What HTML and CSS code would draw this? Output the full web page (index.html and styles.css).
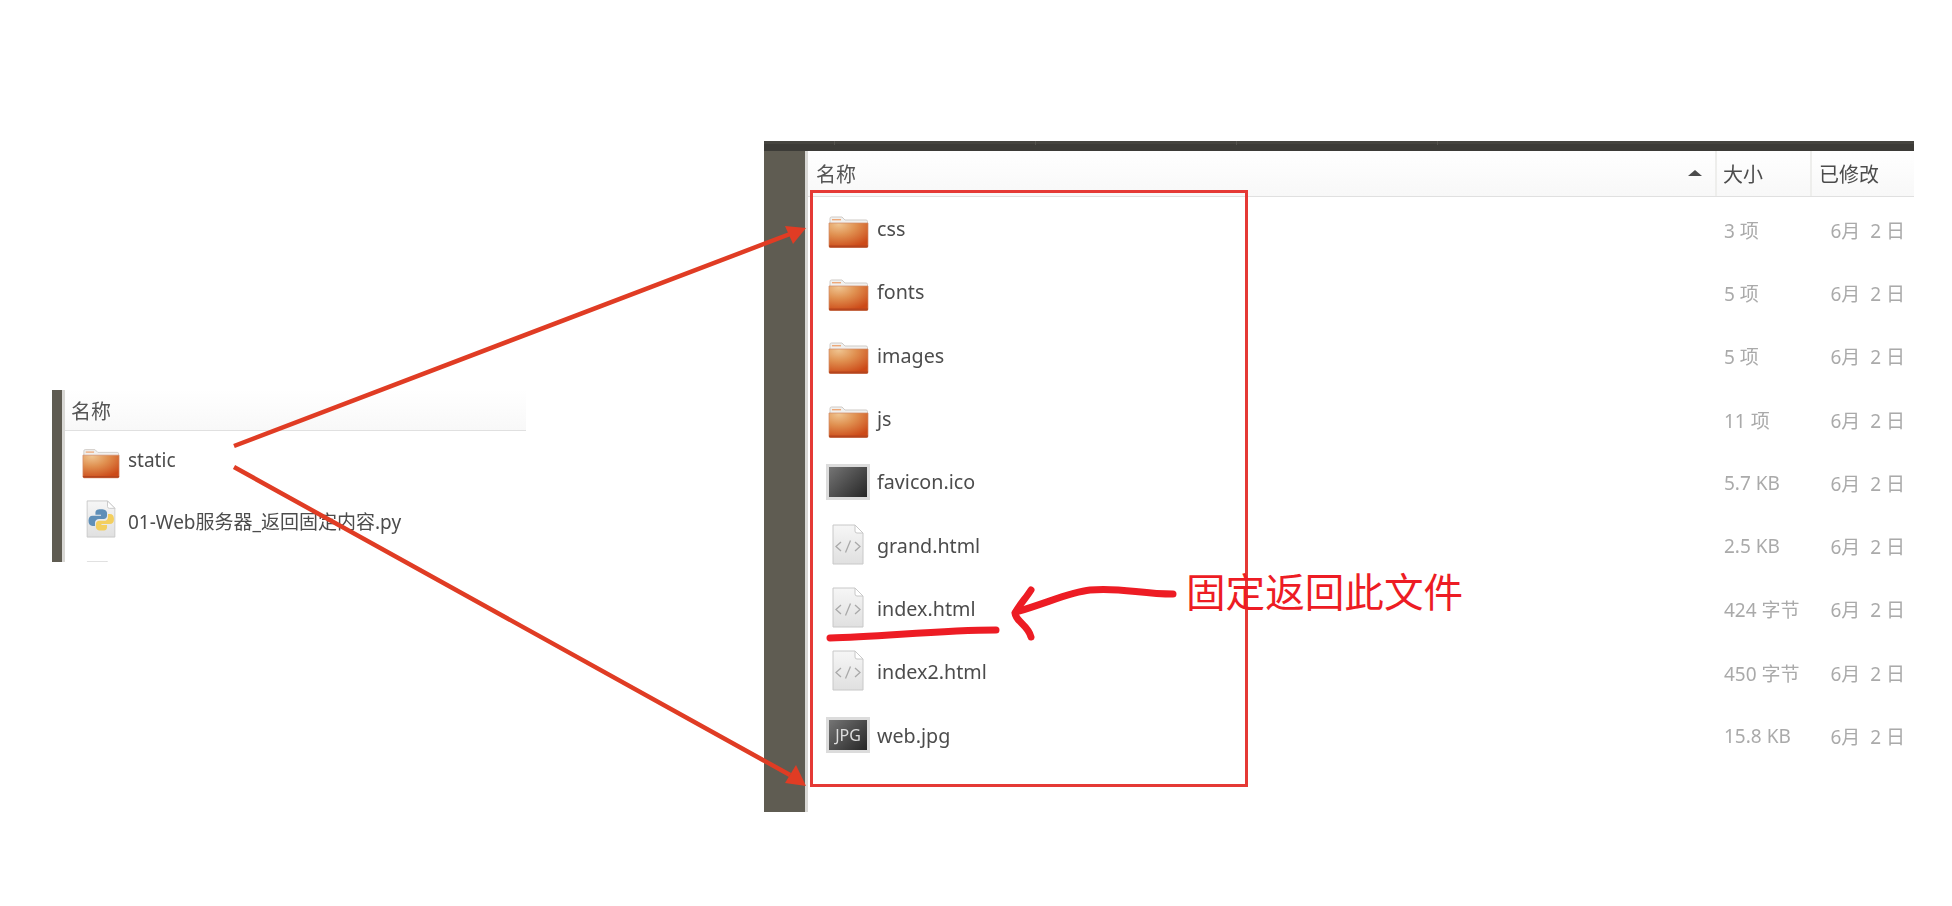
FILE: index.html
```html
<!DOCTYPE html>
<html lang="zh-CN">
<head>
    <meta charset="UTF-8">
    <title>static</title>
    <link rel="stylesheet" href="styles.css">
</head>
<body>
    <svg class="defs" width="0" height="0">
        <defs>
            <radialGradient id="folderFill" cx="0.25" cy="0.05" r="1">
                <stop offset="0" stop-color="#efc490"/>
                <stop offset="0.45" stop-color="#e09050"/>
                <stop offset="1" stop-color="#cc4a18"/>
            </radialGradient>
            <linearGradient id="pageFill" x1="0" y1="0" x2="0" y2="1">
                <stop offset="0" stop-color="#f6f6f6"/>
                <stop offset="1" stop-color="#e0e0e0"/>
            </linearGradient>
            <symbol id="folder" viewBox="0 0 41 32">
                <path d="M2 7V2.500Q2 1 3.500 1H14l3 3h21q1.500 0 1.500 1.500V8H2z" fill="#f1f0ee" stroke="#cfcbc7"/>
                <rect x="4" y="3" width="9" height="1.400" fill="#eda878"/>
                <path d="M1 7h39v23q0 1.500-1.500 1.500h-36Q1 31.500 1 30z" fill="url(#folderFill)" stroke="#d08a68" stroke-width="0.700"/>
                <path d="M1 29.500h39V30q0 1.500-1.500 1.500h-36Q1 31.500 1 30z" fill="#b5451e"/>
            </symbol>
            <symbol id="page" viewBox="0 0 32 41">
                <path d="M1 1h22l8 8v31H1z" fill="url(#pageFill)" stroke="#c8c8c8"/>
                <path d="M23 1v6q0 2 2 2h6z" fill="#fff" stroke="#c8c8c8"/>
            </symbol>
            <symbol id="code" viewBox="0 0 32 41">
                <use href="#page" width="32" height="41"/>
                <path d="M9 18l-5 4.500 5 4.500M23 18l5 4.500-5 4.500M18.500 16.500l-5 12" fill="none" stroke="#a9a9a9" stroke-width="1.300"/>
            </symbol>
            <symbol id="py" viewBox="0 0 32 41">
                <use href="#page" width="32" height="41"/>
                <path d="M16 10c-5 0-6 1.500-6 4v2h6v1H7c-3 0-4.500 2-4.500 5.500S4 28 7 28h2.500v-3.500c0-2.500 2-4 4.500-4h5c2 0 3.500-1.500 3.500-3.500v-3c0-2.500-2.500-4-6.500-4z" fill="#5f8fb8"/>
                <path d="M16.500 33c5 0 6-1.500 6-4v-2h-6v-1h9c3 0 4.500-2 4.500-5.500S28.500 15 25.500 15H23.500v3.500c0 2.500-2 4-4.500 4h-5c-2 0-3.500 1.500-3.500 3.500v3c0 2.500 2.500 4 6 4z" fill="#f3cf5f"/>
            </symbol>
        </defs>
    </svg>

    <main class="stage">
        <section class="window window-small">
            <div class="side"></div>
            <div class="pane">
                <div class="list-head">
                    <div class="col-name">名称</div>
                </div>
                <div class="row">
                    <div class="icon"><svg class="folder-icon" width="38" height="31"><use href="#folder"/></svg></div>
                    <div class="col-name">static</div>
                </div>
                <div class="row">
                    <div class="icon"><svg class="file-icon" width="30" height="38"><use href="#py"/></svg></div>
                    <div class="col-name">01-Web服务器_返回固定内容.py</div>
                </div>
                <div class="row">
                    <div class="icon"><svg class="file-icon" width="30" height="38"><use href="#page"/></svg></div>
                </div>
            </div>
        </section>

        <section class="window window-big">
            <div class="topbar">
                <span class="tab-line"></span>
                <span class="tab-line"></span>
                <span class="tab-line"></span>
                <span class="tab-line"></span>
            </div>
            <div class="body">
                <div class="side"></div>
                <div class="pane">
                    <div class="list-head">
                        <div class="col-name">名称<span class="sort"></span></div>
                        <div class="col-size">大小</div>
                        <div class="col-date">已修改</div>
                    </div>
                    <div class="row">
                        <div class="icon"><svg class="folder-icon" width="41" height="32"><use href="#folder"/></svg></div>
                        <div class="col-name">css</div>
                        <div class="col-size">3 项</div>
                        <div class="col-date">6月 &nbsp;2 日</div>
                    </div>
                    <div class="row">
                        <div class="icon"><svg class="folder-icon" width="41" height="32"><use href="#folder"/></svg></div>
                        <div class="col-name">fonts</div>
                        <div class="col-size">5 项</div>
                        <div class="col-date">6月 &nbsp;2 日</div>
                    </div>
                    <div class="row">
                        <div class="icon"><svg class="folder-icon" width="41" height="32"><use href="#folder"/></svg></div>
                        <div class="col-name">images</div>
                        <div class="col-size">5 项</div>
                        <div class="col-date">6月 &nbsp;2 日</div>
                    </div>
                    <div class="row">
                        <div class="icon"><svg class="folder-icon" width="41" height="32"><use href="#folder"/></svg></div>
                        <div class="col-name">js</div>
                        <div class="col-size">11 项</div>
                        <div class="col-date">6月 &nbsp;2 日</div>
                    </div>
                    <div class="row">
                        <div class="icon"><span class="thumb"></span></div>
                        <div class="col-name">favicon.ico</div>
                        <div class="col-size">5.7 KB</div>
                        <div class="col-date">6月 &nbsp;2 日</div>
                    </div>
                    <div class="row">
                        <div class="icon"><svg class="file-icon" width="32" height="41"><use href="#code"/></svg></div>
                        <div class="col-name">grand.html</div>
                        <div class="col-size">2.5 KB</div>
                        <div class="col-date">6月 &nbsp;2 日</div>
                    </div>
                    <div class="row">
                        <div class="icon"><svg class="file-icon" width="32" height="41"><use href="#code"/></svg></div>
                        <div class="col-name">index.html</div>
                        <div class="col-size">424 字节</div>
                        <div class="col-date">6月 &nbsp;2 日</div>
                    </div>
                    <div class="row">
                        <div class="icon"><svg class="file-icon" width="32" height="41"><use href="#code"/></svg></div>
                        <div class="col-name">index2.html</div>
                        <div class="col-size">450 字节</div>
                        <div class="col-date">6月 &nbsp;2 日</div>
                    </div>
                    <div class="row">
                        <div class="icon"><span class="thumb">JPG</span></div>
                        <div class="col-name">web.jpg</div>
                        <div class="col-size">15.8 KB</div>
                        <div class="col-date">6月 &nbsp;2 日</div>
                    </div>
                </div>
            </div>
        </section>

        <!-- annotations drawn over the two windows -->
        <div class="red-box"></div>
        <svg class="marks" width="1952" height="906" viewBox="0 0 1952 906">
            <path d="M234 446L790 234M234 467L790 775" fill="none" stroke="#e03c24" stroke-width="4.500"/>
            <path d="M806 228L785 226L793 244z" fill="#e03c24"/>
            <path d="M806 786L785 783L796 765z" fill="#e03c24"/>
            <path d="M1173 594C1140 594 1120 587 1090 590C1070 592 1050 602 1016 612" fill="none" stroke="#ed1c24" stroke-width="7" stroke-linecap="round"/>
            <path d="M1031 590C1026 598 1020 604 1015 613C1016 622 1028 625 1031 637" fill="none" stroke="#ed1c24" stroke-width="7" stroke-linecap="round"/>
            <path d="M830 638C880 637 940 630 996 630" fill="none" stroke="#ed1c24" stroke-width="7" stroke-linecap="round"/>
        </svg>
        <div class="note">固定返回此文件</div>
    </main>
</body>
</html>
```

FILE: styles.css
```css
body {
    margin: 0;
    background-color: #fff;
    font-family: 'Noto Sans', 'Noto Sans CJK SC', sans-serif;
    color: #4c4c4c;
}

.defs {
    position: absolute;
}

.stage {
    position: relative;
    display: flex;
    align-items: flex-start;
    height: 906px;
    overflow: hidden;
}

.window {
    overflow: hidden;
    background-color: #fff;
    filter: blur(0.4px); /* the source shot is a bit soft */
}

.window-small {
    display: flex;
    width: 474px;
    height: 172px;
    margin-top: 390px;
    margin-left: 52px;
}

.window-small .side {
    width: 10px;
    flex-shrink: 0;
}

.window-small .row {
    height: 61px;
    font-size: 19px;
}

.window-small .list-head {
    height: 40px;
    margin-bottom: -2px;
}

.window-small .list-head .col-name {
    padding-left: 6px;
}

.window-small .icon {
    padding-left: 14px;
    margin-right: 5px;
}

.window-small .folder-icon {
    margin-top: 8px;
}

.window-small .file-icon {
    margin-top: -4px;
}

.window-big {
    width: 1150px;
    height: 671px;
    margin-top: 141px;
    margin-left: 238px;
}

.topbar {
    display: flex;
    gap: 200px;
    padding-left: 70px;
    height: 10px;
    background-color: #3c3b37;
    box-shadow: inset 0 3px 0 #45443f;
}

.tab-line {
    width: 1px;
    height: 4px;
    background-color: #55544e;
}

.body {
    display: flex;
    height: 661px;
}

.side {
    width: 41px;
    background-color: #5f5c52;
}

.pane {
    flex: 1;
    min-width: 0;
    border-left: 3px solid #d9d8d5;
}

.list-head {
    display: flex;
    align-items: center;
    height: 45px;
    background: linear-gradient(180deg, #fff, #f8f8f8);
    border-bottom: 1px solid #e0e0e0;
    font-size: 20px;
    color: #555;
}

.list-head .col-name {
    position: relative;
    padding-left: 8px;
}

.list-head .col-size,
.list-head .col-date {
    height: 100%;
    padding-top: 0;
    line-height: 47px;
    border-left: 2px solid #eeeeec;
    box-sizing: border-box;
    text-align: left;
    color: #4c4c4c;
    font-size: 20px;
}

.list-head .col-size {
    padding-left: 6px;
}

.list-head .col-date {
    padding-left: 7px;
    padding-right: 0;
}

.sort {
    position: absolute;
    right: 13px;
    top: 50%;
    margin-top: -4px;
    border-left: 7px solid transparent;
    border-right: 7px solid transparent;
    border-bottom: 6px solid #4c4c4c;
}

.row {
    display: flex;
    align-items: center;
    height: 63.3px;
    font-size: 19.7px;
}

.icon {
    display: flex;
    justify-content: center;
    align-items: center;
    width: 44px;
    padding-left: 18px;
    margin-right: 7px;
    flex-shrink: 0;
}

.icon svg {
    display: block;
}

.folder-icon {
    margin-top: 6px;
}

.file-icon {
    margin-top: -2px;
}

.thumb {
    display: flex;
    align-items: center;
    justify-content: center;
    width: 38px;
    height: 30px;
    background: linear-gradient(135deg, #757575, #262626);
    border: 3px solid #dcdcdc;
    font-size: 16px;
    color: #ddd;
}

.col-name {
    flex: 1;
    min-width: 0;
}

.col-size {
    width: 95px;
    padding-top: 2px;
    padding-left: 9px;
    box-sizing: border-box;
    font-size: 19px;
    color: #aaa;
}

.col-date {
    width: 104px;
    padding-top: 2px;
    padding-right: 9px;
    box-sizing: border-box;
    text-align: right;
    font-size: 19px;
    color: #aaa;
}

.red-box {
    position: absolute;
    left: 810px;
    top: 190px;
    width: 432px;
    height: 591px;
    border: 3px solid #e53935;
}

.marks {
    position: absolute;
    left: 0;
    top: 0;
}

.note {
    position: absolute;
    left: 1186px;
    top: 563px;
    font-size: 39.6px;
    line-height: 58px;
    color: #ed1c24;
}
```
